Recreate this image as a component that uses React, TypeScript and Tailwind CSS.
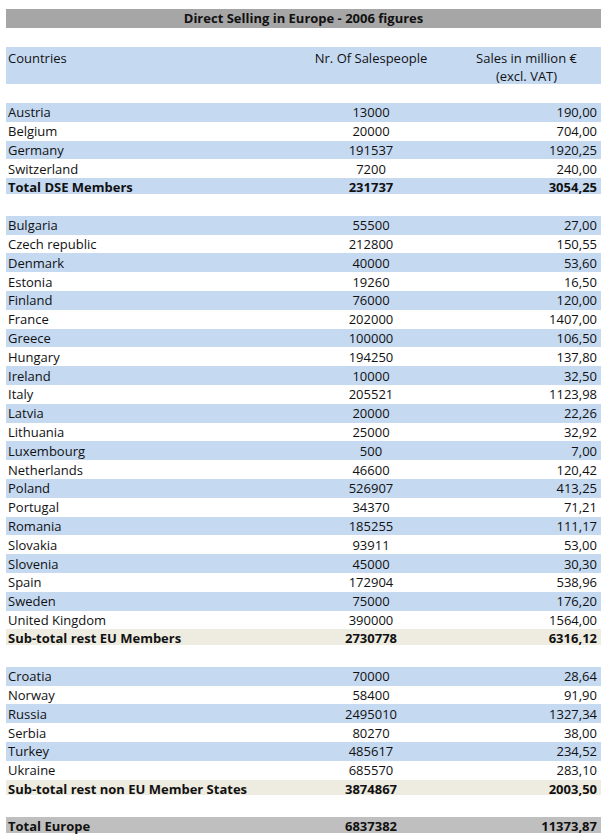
type Kind = 'blue' | 'white' | 'dse' | 'sub' | 'total' | 'blank';

interface Row {
  name?: string;
  people?: string;
  sales?: string;
  kind: Kind;
}

const raw: [string, string, string][] = [
  ['Austria', '13000', '190,00'],
  ['Belgium', '20000', '704,00'],
  ['Germany', '191537', '1920,25'],
  ['Switzerland', '7200', '240,00'],
];

const eu: [string, string, string][] = [
  ['Bulgaria', '55500', '27,00'],
  ['Czech republic', '212800', '150,55'],
  ['Denmark', '40000', '53,60'],
  ['Estonia', '19260', '16,50'],
  ['Finland', '76000', '120,00'],
  ['France', '202000', '1407,00'],
  ['Greece', '100000', '106,50'],
  ['Hungary', '194250', '137,80'],
  ['Ireland', '10000', '32,50'],
  ['Italy', '205521', '1123,98'],
  ['Latvia', '20000', '22,26'],
  ['Lithuania', '25000', '32,92'],
  ['Luxembourg', '500', '7,00'],
  ['Netherlands', '46600', '120,42'],
  ['Poland', '526907', '413,25'],
  ['Portugal', '34370', '71,21'],
  ['Romania', '185255', '111,17'],
  ['Slovakia', '93911', '53,00'],
  ['Slovenia', '45000', '30,30'],
  ['Spain', '172904', '538,96'],
  ['Sweden', '75000', '176,20'],
  ['United Kingdom', '390000', '1564,00'],
];

const nonEu: [string, string, string][] = [
  ['Croatia', '70000', '28,64'],
  ['Norway', '58400', '91,90'],
  ['Russia', '2495010', '1327,34'],
  ['Serbia', '80270', '38,00'],
  ['Turkey', '485617', '234,52'],
  ['Ukraine', '685570', '283,10'],
];

// alternate blue / white, starting with blue in every block
const striped = (list: [string, string, string][]): Row[] =>
  list.map(([name, people, sales], i) => ({
    name,
    people,
    sales,
    kind: i % 2 === 0 ? 'blue' : 'white',
  }));

const rows: Row[] = [
  ...striped(raw),
  { name: 'Total DSE Members', people: '231737', sales: '3054,25', kind: 'dse' },
  { kind: 'blank' },
  ...striped(eu),
  { name: 'Sub-total rest EU Members', people: '2730778', sales: '6316,12', kind: 'sub' },
  { kind: 'blank' },
  ...striped(nonEu),
  { name: 'Sub-total rest non EU Member States', people: '3874867', sales: '2003,50', kind: 'sub' },
  { kind: 'blank' },
  { name: 'Total Europe', people: '6837382', sales: '11373,87', kind: 'total' },
];

const bandColor: Record<Kind, string> = {
  blue: 'bg-[#c5d9f1]',
  white: 'bg-white',
  dse: 'bg-[#c5d9f1]',
  sub: 'bg-[#eeece1]',
  total: 'bg-[#bfbfbf]',
  blank: 'bg-white',
};

function TableRow({ row }: { row: Row }) {
  if (row.kind === 'blank') return <div className="h-[18.8px]" />;
  const bold = row.kind === 'dse' || row.kind === 'sub' || row.kind === 'total';
  return (
    <div className="h-[18.8px]">
      <div
        className={`grid grid-cols-[284px_162px_1fr] items-center ${bandColor[row.kind]} ${
          bold ? 'h-[15.6px] font-bold' : 'h-[18.8px]'
        }`}
      >
        <span className="pl-[2px] whitespace-nowrap">{row.name}</span>
        <span className="text-center">{row.people}</span>
        <span className="text-right pr-[4px]">{row.sales}</span>
      </div>
    </div>
  );
}

export default function App() {
  return (
    <div className="min-h-screen bg-white pt-[9px] text-[13px] leading-[18px] text-[#111]" style={{ fontFamily: '"Open Sans", sans-serif' }}>
      <div className="ml-[6px] w-[595px]">
        {/* title */}
        <div className="h-[18.8px] bg-[#a6a6a6] flex items-center justify-center font-bold">
          Direct Selling in Europe - 2006 figures
        </div>
        <div className="h-[18.8px]" />

        {/* column headers */}
        <div className="h-[37.6px] bg-[#c5d9f1] grid grid-cols-[284px_162px_1fr] pt-[2px]">
          <span className="pl-[2px]">Countries</span>
          <span className="text-center">Nr. Of Salespeople</span>
          <span className="text-center">
            Sales in million €
            <br />
            (excl. VAT)
          </span>
        </div>
        <div className="h-[18.8px]" />

        {rows.map((r, i) => (
          <TableRow key={i} row={r} />
        ))}
      </div>
    </div>
  );
}
